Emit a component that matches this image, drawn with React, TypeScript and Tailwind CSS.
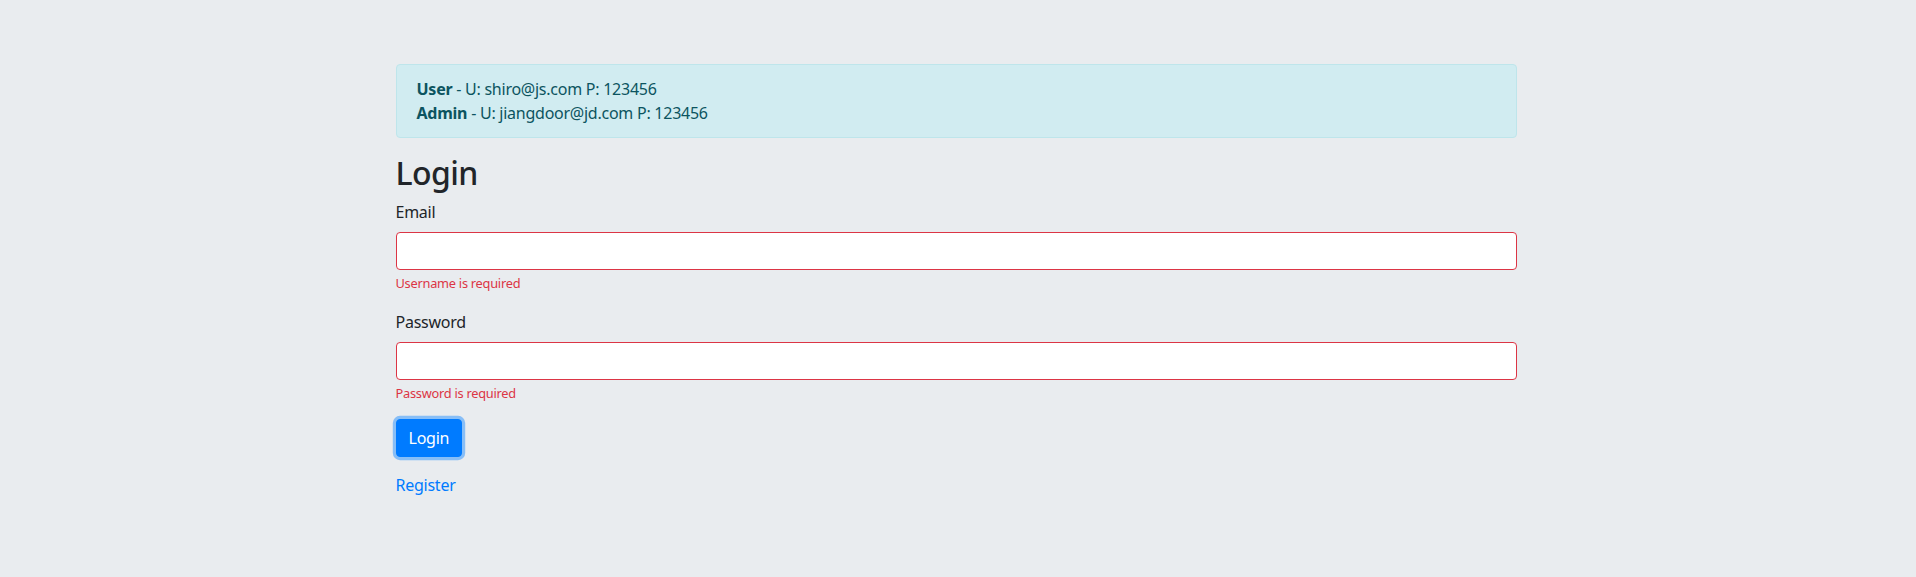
export default function App() {
  return (
    <div
      className="min-h-[577px] w-full bg-[#e9ecef] text-[16px] leading-[24px] tracking-[-0.25px] text-[#212529]"
      style={{ fontFamily: '"Noto Sans", "Open Sans", "Liberation Sans", sans-serif' }}
    >
      <div className="flex justify-center pr-[4px] pt-[64px]">
        <div className="w-[1121px]">
          {/* demo accounts */}
          <div className="mb-[16px] rounded-[4px] border border-[#bee5eb] bg-[#d1ecf1] px-[20px] py-[12px] text-[#0c5460]">
            <div>
              <strong className="font-bold">User</strong> - U: shiro@js.com P: 123456
            </div>
            <div>
              <strong className="font-bold">Admin</strong> - U: jiangdoor@jd.com P: 123456
            </div>
          </div>

          <h2 className="mb-[8px] text-[32px] font-medium leading-[38.4px] tracking-[-0.6px]">Login</h2>

          <form onSubmit={(e) => e.preventDefault()}>
            <div className="mb-[16px]">
              <label className="mb-[8px] inline-block">Email</label>
              <input
                type="text"
                className="block h-[38px] w-full rounded-[4px] border border-[#dc3545] bg-white px-[12px] py-[6px] outline-none"
              />
              <div className="mt-[4px] text-[12.8px] leading-[19.2px] text-[#dc3545]">Username is required</div>
            </div>

            <div className="mb-[16px]">
              <label className="mb-[8px] inline-block">Password</label>
              <input
                type="password"
                className="block h-[38px] w-full rounded-[4px] border border-[#dc3545] bg-white px-[12px] py-[6px] outline-none"
              />
              <div className="mt-[4px] text-[12.8px] leading-[19.2px] text-[#dc3545]">Password is required</div>
            </div>

            <div className="mb-[16px]">
              <button
                type="submit"
                className="h-[38px] rounded-[4px] border border-[#007bff] bg-[#007bff] px-[12px] text-white shadow-[0_0_0_3.2px_rgba(38,143,255,0.5)]"
              >
                Login
              </button>
            </div>

            <a href="#" className="text-[#007bff]">
              Register
            </a>
          </form>
        </div>
      </div>
    </div>
  )
}
